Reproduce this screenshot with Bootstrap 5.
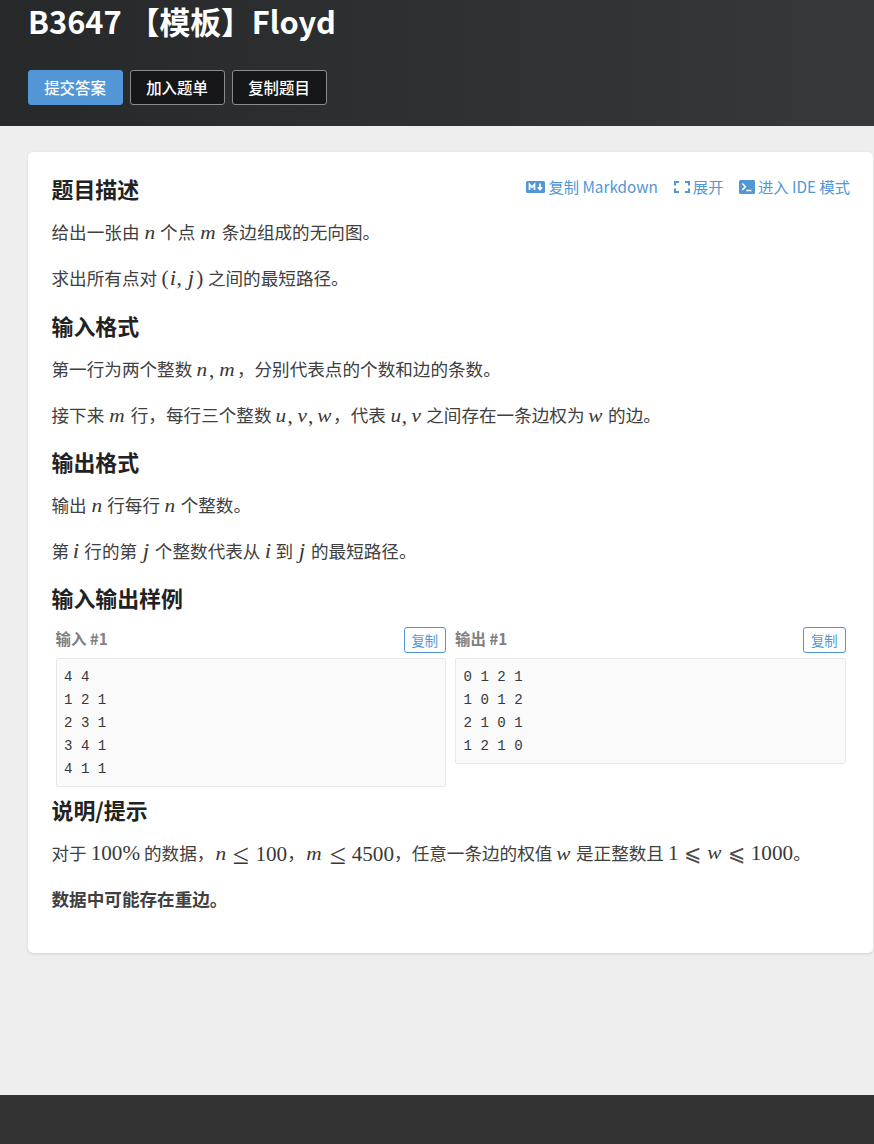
<!DOCTYPE html>
<html lang="zh-CN">
<head>
<meta charset="utf-8">
<meta name="viewport" content="width=device-width, initial-scale=1">
<title>B3647 【模板】Floyd</title>
<link href="https://cdn.jsdelivr.net/npm/bootstrap@5.3.0/dist/css/bootstrap.min.css" rel="stylesheet">
<style>
  body { font-family: "Noto Sans CJK SC", sans-serif; font-size: 15.3px; color: #404040; background: #eee; overflow: hidden; }
  .top-band { height: 126px; padding-left: 28px; background: linear-gradient(to right, #272829, #373839); }
  .top-band h1 { font-size: 30.8px; font-weight: 700; line-height: 42px; margin-bottom: 28px; }
  .act { width: 95px; height: 35px; padding: 0 1px 0 0; font-size: 15.4px; font-weight: 500; line-height: 33px; border-radius: 3px; }
  .act-blue { background: #5296d6; border-color: #5296d6; color: #fff; }
  .act-dark { background: #161718; border-color: #8b8b8c; color: #fff; }
  .problem { margin: 26px 1px 0 28px; height: 801px; padding: 23px 23px 24px 23.5px; border-radius: 5px; box-shadow: 0 1px 3px rgba(26,26,26,.13); }
  .problem h2 { font-size: 21.9px; font-weight: 700; line-height: 28px; color: #222; margin: 0 0 15px; }
  .problem p { font-size: 17.6px; line-height: 28px; height: 28px; white-space: nowrap; margin: 0 0 18px; }
  .problem p.sec-end { margin-bottom: 19px; }
  .problem p.sec-first { margin-bottom: 20px; }
  .tools { margin-top: -3px; }
  .tools a { color: #5296d6; line-height: 28px; text-decoration: none; white-space: nowrap; }
  .tools svg { position: relative; top: 1px; }
  .samples { margin: 0 4.5px 10px 4px; gap: 9px; }
  .sample-title { font-size: 15.4px; font-weight: 700; color: #808080; line-height: 23px; height: 26px; }
  .copy { width: 42.5px; height: 26px; padding: 0; font-size: 13.3px; line-height: 25px; color: #5296d6; border: 1px solid #5296d6; border-radius: 3px; background: #fff; }
  .samples pre { margin: 5px 0 0; padding: 7px 8px 5px 7.5px; border: 1px solid #e8e8e8; border-radius: 2px; background: #fafafa; color: #383838; font: 14.1px/23px "Liberation Mono", monospace; }
  /* inline math: each symbol sits in a box with its typeset advance width */
  .mt { display: inline-flex; font: 21.2px/28px "Liberation Serif", serif; height: 28px; vertical-align: baseline; color: #383838; }
  .mt i, .mt b, .mt u { display: inline-block; text-align: center; font-weight: 400; text-decoration: none; }
  .mt i { font-size: 19px; margin-left: -.5px; margin-right: .5px; }
  .mt i > span { display: inline-block; transform: scaleX(1.12); }
  .mt .w-i, .mt .w-j { font-size: 20.4px; }
  .w-n { width: 12.7px; } .w-m { width: 18.6px; } .w-i { width: 7.3px; } .w-j { width: 9.9px; }
  .w-u { width: 12.1px; } .w-v { width: 11px; } .w-w { width: 15.7px; }
  .mt b { width: 9.4px; text-align: left; }
  .mt u { width: 28.3px; }
  .mt u span { display: inline-block; transform: translateY(1px) scale(1.4, 1.35); }
  .mt u.slant { font: 200 15px/28px "DejaVu Sans", sans-serif; color: #4c4c4c; }
  .mt u.slant span { transform: scale(1.35, 1.5); }
  .mt s { text-decoration: none; width: 8.2px; text-align: center; }
  .foot { margin-top: 142px; height: 49px; background: #333; }
</style>
</head>
<body>
<header class="top-band">
  <h1 class="text-white">B3647 【模板】Floyd</h1>
  <div class="d-flex" style="gap:7px">
    <button class="btn act act-blue">提交答案</button>
    <button class="btn act act-dark">加入题单</button>
    <button class="btn act act-dark">复制题目</button>
  </div>
</header>
<main class="problem bg-white">
  <div class="d-flex justify-content-between align-items-start">
    <h2>题目描述</h2>
    <div class="tools d-flex">
      <a href="#" class="d-flex align-items-center" style="margin-right:16px"><svg width="19" height="12" viewBox="0 0 19 12" style="margin-right:3px"><rect width="19" height="12" rx="1.5" fill="#5296d6"/><path d="M3.5 9V3.3L6 6.3 8.5 3.3V9M14 2.5V8M11.9 6.3L14 8.7 16.1 6.3" fill="none" stroke="#fff" stroke-width="1.7"/></svg>复制 Markdown</a>
      <a href="#" class="d-flex align-items-center" style="margin-right:15.5px"><svg width="16" height="12" viewBox="0 0 16 12" style="margin-right:3px"><path d="M5 1H1V4.5M11 1H15V4.5M1 7.5V11H5M15 7.5V11H11" fill="none" stroke="#5296d6" stroke-width="2"/></svg>展开</a>
      <a href="#" class="d-flex align-items-center"><svg width="16" height="14" viewBox="0 0 16 14" style="margin-right:3px"><rect width="16" height="14" rx="1.5" fill="#5296d6"/><path d="M3.2 3.5L6.5 6.7 3.2 9.9M7.3 10.5H12.5" fill="none" stroke="#fff" stroke-width="1.5"/></svg>进入 IDE 模式</a>
    </div>
  </div>
  <p>给出一张由 <span class="mt"><i class="w-n"><span>n</span></i></span> 个点 <span class="mt"><i class="w-m"><span>m</span></i></span> 条边组成的无向图。</p>
  <p class="sec-first">求出所有点对 <span class="mt"><s>(</s><i class="w-i"><span>i</span></i><b>,</b><i class="w-j"><span>j</span></i><s>)</s></span> 之间的最短路径。</p>

  <h2>输入格式</h2>
  <p>第一行为两个整数 <span class="mt"><i class="w-n"><span>n</span></i><b>,</b><i class="w-m"><span>m</span></i></span>，分别代表点的个数和边的条数。</p>
  <p class="sec-end">接下来 <span class="mt"><i class="w-m"><span>m</span></i></span> 行，每行三个整数 <span class="mt"><i class="w-u"><span>u</span></i><b>,</b><i class="w-v"><span>v</span></i><b>,</b><i class="w-w"><span>w</span></i></span>，代表 <span class="mt"><i class="w-u"><span>u</span></i><b>,</b><i class="w-v"><span>v</span></i></span> 之间存在一条边权为 <span class="mt"><i class="w-w"><span>w</span></i></span> 的边。</p>

  <h2>输出格式</h2>
  <p>输出 <span class="mt"><i class="w-n"><span>n</span></i></span> 行每行 <span class="mt"><i class="w-n"><span>n</span></i></span> 个整数。</p>
  <p class="sec-end">第 <span class="mt"><i class="w-i"><span>i</span></i></span> 行的第 <span class="mt"><i class="w-j"><span>j</span></i></span> 个整数代表从 <span class="mt"><i class="w-i"><span>i</span></i></span> 到 <span class="mt"><i class="w-j"><span>j</span></i></span> 的最短路径。</p>

  <h2>输入输出样例</h2>
  <div class="samples d-flex align-items-start">
    <section class="flex-fill w-50">
      <div class="d-flex justify-content-between"><span class="sample-title">输入 #1</span><button class="copy">复制</button></div>
<pre>4 4
1 2 1
2 3 1
3 4 1
4 1 1</pre>
    </section>
    <section class="flex-fill w-50">
      <div class="d-flex justify-content-between"><span class="sample-title">输出 #1</span><button class="copy">复制</button></div>
<pre>0 1 2 1
1 0 1 2
2 1 0 1
1 2 1 0</pre>
    </section>
  </div>

  <h2 style="margin-top:-1px">说明/提示</h2>
  <p>对于 <span class="mt">100%</span> 的数据，<span class="mt"><i class="w-n"><span>n</span></i><u><span>≤</span></u>100</span>，<span class="mt"><i class="w-m"><span>m</span></i><u><span>≤</span></u>4500</span>，任意一条边的权值 <span class="mt"><i class="w-w"><span>w</span></i></span> 是正整数且 <span class="mt">1<u class="slant"><span>⩽</span></u><i class="w-w"><span>w</span></i><u class="slant"><span>⩽</span></u>1000</span>。</p>
  <p><strong>数据中可能存在重边。</strong></p>
</main>
<footer class="foot"></footer>
<script src="https://cdn.jsdelivr.net/npm/bootstrap@5.3.0/dist/js/bootstrap.bundle.min.js"></script>
</body>
</html>
